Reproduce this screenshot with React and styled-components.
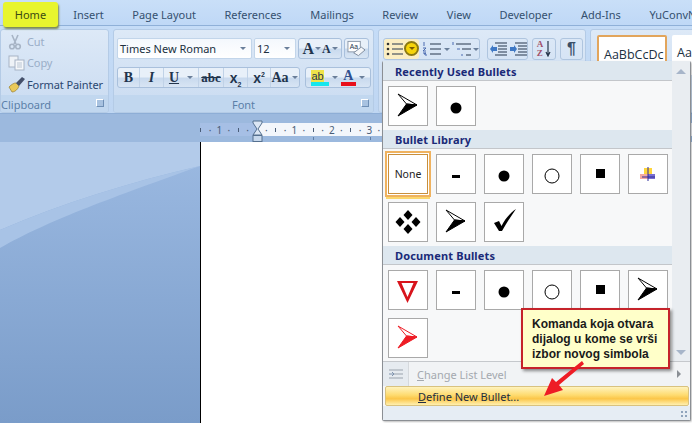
import React from "react";
import styled, { createGlobalStyle } from "styled-components";

const GlobalStyle = createGlobalStyle`
  html, body { margin: 0; padding: 0; background: #7f9fca; }
  * { box-sizing: border-box; }
`;

const Page = styled.div`
  position: relative;
  width: 692px;
  height: 423px;
  overflow: hidden;
  display: flex;
  flex-direction: column;
  font-family: "Noto Sans", "Liberation Sans", sans-serif;
  font-size: 11px;
  color: #2b4770;
`;

const TabBar = styled.div`
  height: 26px;
  flex: none;
  display: flex;
  align-items: center;
  padding: 3px 0 0 0.5px;
  background: linear-gradient(#c9dff8, #bfd8f6);
  border-bottom: 1px solid #8fb0d8;
  white-space: nowrap;
`;

const Tab = styled.div`
  position: relative;
  padding: 0 14.3px;
  color: #34506f;
  ${(p) =>
    p.$active &&
    `
    z-index: 3;
    margin-right: -1.5px;
    color: #3c4a12;
    &::before {
      content: "";
      position: absolute;
      z-index: -1;
      left: 2px;
      right: 2px;
      top: -5px;
      bottom: -5px;
      background: #e8f52e;
      border-radius: 3px;
      box-shadow: 1px 2px 2px #7d8a55;
    }
  `}
`;

const Ribbon = styled.div`
  height: 88px;
  flex: none;
  display: flex;
  gap: 4px;
  padding: 3px 0 0;
  background: linear-gradient(#c5dcf7, #bfd6f2);
  border-bottom: 1px solid #8eaed6;
`;

const Group = styled.div`
  width: ${(p) => p.$width}px;
  flex: none;
  display: flex;
  flex-direction: column;
  border: 1px solid #b4cbe6;
  border-radius: 3px;
  background: linear-gradient(#dde9f7, #c9dbf1);
  overflow: hidden;
`;

const GroupBody = styled.div`
  flex: 1;
  min-height: 0;
  display: flex;
  flex-direction: column;
  padding: ${(p) => p.$padding || "0"};
  gap: ${(p) => p.$gap || 0}px;
`;

const GroupLabel = styled.div`
  position: relative;
  height: 17px;
  flex: none;
  text-align: ${(p) => p.$align || "center"};
  line-height: 19px;
  color: #5b7fa8;
  background: #c1d7ef;
  font-size: 11px;
`;

const Launcher = styled.span`
  position: absolute;
  right: 4px;
  top: 4px;
  width: 8px;
  height: 8px;
  border: 1px solid #6f8fb5;
  border-top-color: #fff;
  border-left-color: #fff;
  background: #a8c2e0;
`;

const ClipRow = styled.div`
  height: 22px;
  display: flex;
  align-items: center;
  white-space: nowrap;
  padding-left: 7px;
  letter-spacing: -0.1px;
  color: ${(p) => (p.$disabled ? "#9aaec8" : "#2b4770")};
`;

const ClipIcon = styled.span`
  width: 19px;
  flex: none;
  display: flex;
  align-items: center;
`;

const Row = styled.div`
  display: flex;
  gap: ${(p) => p.$gap || 2}px;
  height: ${(p) => p.$height || 21}px;
  flex: none;
`;

const Field = styled.div`
  width: ${(p) => p.$width}px;
  display: flex;
  align-items: center;
  justify-content: space-between;
  padding: 0 5px 0 2px;
  background: linear-gradient(#f4f8fd, #fff);
  border: 1px solid #c2d5ea;
  border-radius: 2px;
  color: #20303f;
  font-size: 11px;
`;

const Caret = styled.span`
  width: 0;
  height: 0;
  border-left: 3px solid transparent;
  border-right: 3px solid transparent;
  border-top: 3px solid ${(p) => p.$color || "#6a7f9a"};
  flex: none;
`;

const ButtonGroup = styled.div`
  width: ${(p) => p.$width}px;
  flex: none;
  display: flex;
  align-items: center;
  justify-content: ${(p) => p.$justify || "space-around"};
  padding: 0 ${(p) => p.$pad ?? 2}px;
  border: 1px solid #a9c0dc;
  border-radius: 3px;
  background: linear-gradient(#e8f0f9 45%, #c9daee 55%, #d8e5f4);
  color: #22344c;
`;

const FmtCell = styled.span`
  width: ${(p) => p.$width}px;
  height: 100%;
  flex: none;
  display: flex;
  align-items: center;
  justify-content: center;
  gap: ${(p) => p.$gap || 0}px;
  border-right: 1px solid ${(p) => (p.$last ? "transparent" : "#c0d2e7")};
`;

const Fmt = styled.span`
  font-family: ${(p) => (p.$serif ? '"Liberation Serif", serif' : '"Liberation Sans", sans-serif')};
  font-weight: 700;
  font-style: ${(p) => (p.$italic ? "italic" : "normal")};
  font-size: ${(p) => p.$size || 14}px;
  text-decoration: ${(p) => p.$deco || "none"};
  color: ${(p) => p.$color || "#22344c"};
  line-height: 1;
`;

const Sub = styled.sub`
  font-size: 7px;
  line-height: 0;
`;

const Sup = styled.sup`
  font-size: 7px;
  line-height: 0;
`;

const ColorA = styled.span`
  display: flex;
  flex-direction: column;
  align-items: center;
  width: 15px;
  font: 700 14px/12px "Liberation Serif", serif;
  color: #2f4f8f;
  &::after {
    content: "";
    width: 15px;
    height: 4px;
    background: #e8101c;
  }
`;

const Highlight = styled.span`
  display: flex;
  flex-direction: column;
  align-items: center;
  width: 18px;
  font: 400 11px/12px "Liberation Sans", sans-serif;
  color: #2a3a50;
  &::after {
    content: "";
    width: 18px;
    height: 4px;
    background: #16e6ee;
  }
`;

const HighlightText = styled.span`
  background: #efe34a;
  align-self: flex-start;
`;

const ParagraphRow = styled.div`
  display: flex;
  height: 22px;
  flex: none;
`;

const ListCluster = styled.div`
  width: 97px;
  flex: none;
  display: flex;
  border: 1px solid #afc5df;
  border-radius: 3px;
  margin-right: 7px;
`;

const ParagraphButton = styled.div`
  position: relative;
  width: ${(p) => p.$width}px;
  height: ${(p) => (p.$inner ? "100%" : "22px")};
  flex: none;
  display: flex;
  align-items: center;
  justify-content: ${(p) => (p.$hot ? "flex-start" : "center")};
  gap: 2px;
  margin-right: ${(p) => (p.$inner ? 0 : 4)}px;
  border: ${(p) => (p.$inner ? "0" : "1px solid #afc5df")};
  border-radius: 3px;
  background: ${(p) => (p.$hot ? "#fbeec2" : "transparent")};
`;

const HotDot = styled.span`
  position: absolute;
  left: 20px;
  top: 2px;
  width: 15px;
  height: 15px;
  border-radius: 50%;
  background: #f6d40a;
  border: 2px solid #8c7a12;
  display: flex;
  align-items: center;
  justify-content: center;
`;

const Pilcrow = styled.span`
  font: 700 16px/1 "Liberation Sans", sans-serif;
  color: #3b4f68;
`;

const SortLetters = styled.span`
  display: flex;
  flex-direction: column;
  font: 700 9px/9px "Liberation Serif", serif;
  color: #a2506a;
`;

const StyleStrip = styled.div`
  display: flex;
  gap: 5px;
  padding: 5px 0 0 6px;
`;

const StyleTile = styled.div`
  width: ${(p) => (p.$wide ? 70 : 60)}px;
  height: 40px;
  flex: none;
  overflow: hidden;
  white-space: nowrap;
  background: #fff;
  padding: 10px 0 0 5px;
  border: ${(p) => (p.$selected ? "2px solid #e2a55c" : "0")};
  border-radius: 2px;
  font: 400 12.5px/16px "Open Sans", sans-serif;
  color: #20303f;
`;

const Workspace = styled.div`
  flex: 1;
  min-height: 0;
  display: flex;
  flex-direction: column;
`;

const RulerBand = styled.div`
  position: relative;
  height: 28px;
  flex: none;
  padding: 9px 0 6px 200px;
  background: #9cb9de;
`;

const Ruler = styled.div`
  height: 13px;
  display: flex;
  overflow: hidden;
  align-items: center;
  background: linear-gradient(90deg, #a6bfe5 57px, #f3f6fb 57px);
`;

const RulerCell = styled.span`
  width: 9.375px;
  flex: none;
  display: flex;
  align-items: center;
  justify-content: center;
  font: 400 10px/12px "Noto Sans", sans-serif;
  color: #4a5d78;
  &:first-child {
    margin-left: -4px;
  }
`;

const RulerTick = styled.span`
  width: 1px;
  height: 4px;
  background: #4a5d78;
`;

const BandTick = styled.span`
  position: absolute;
  left: ${(p) => p.$left}px;
  top: 23px;
  width: 1px;
  height: 3px;
  background: #5f7ea6;
`;

const Indent = styled.svg`
  position: absolute;
  left: 252px;
  top: 6px;
`;

const Desk = styled.div`
  flex: 1;
  min-height: 0;
  display: flex;
`;

const Margin = styled.div`
  position: relative;
  width: 200px;
  flex: none;
  background: linear-gradient(#9cbae2, #7a9cc9);
`;

const Swoosh = styled.svg`
  position: absolute;
  inset: 0;
`;

const Sheet = styled.div`
  flex: 1;
  background: #fff;
  border-left: 1px solid #000;
`;

const Menu = styled.div`
  position: absolute;
  left: 382px;
  top: 61px;
  width: 309px;
  height: 360px;
  z-index: 4;
  display: flex;
  flex-direction: column;
  background: #f7f8f9;
  border: 1px solid #8b8f94;
  border-top: 0;
  border-radius: 2px;
  box-shadow: 1px 1px 2px rgba(0, 0, 0, 0.25);
`;

const MenuTop = styled.div`
  height: 301px;
  flex: none;
  display: flex;
  border-bottom: 1px solid #c5c8cc;
`;

const Gallery = styled.div`
  width: 289px;
  flex: none;
`;

const Scrollbar = styled.div`
  flex: 1;
  display: flex;
  flex-direction: column;
  align-items: center;
  justify-content: space-between;
  padding: 8px 0 6px;
  background: #e9edf1;
`;

const ScrollArrow = styled.span`
  width: 0;
  height: 0;
  border-left: 5px solid transparent;
  border-right: 5px solid transparent;
  ${(p) => (p.$up ? "border-bottom" : "border-top")}: 5px solid #a7b5c9;
`;

const SectionHeader = styled.div`
  height: ${(p) => (p.$first ? 20 : 19)}px;
  display: flex;
  align-items: center;
  padding: ${(p) => (p.$first ? 2 : 0)}px 0 0 12px;
  background: #dde7ef;
  border-bottom: 1px solid #c3c6ca;
  font-weight: 700;
  font-size: 11px;
  letter-spacing: 0.15px;
  color: #1a2a78;
`;

const TileGrid = styled.div`
  display: grid;
  grid-template-columns: repeat(6, 40px);
  gap: 8px;
  padding: 5px 5px 4px;
`;

const Tile = styled.div`
  width: 40px;
  height: 40px;
  display: flex;
  align-items: center;
  justify-content: center;
  background: #fff;
  border: 1px solid #a9a9a9;
  color: #222;
  font-size: 10.5px;
  ${(p) =>
    p.$selected &&
    `
    border-color: #c98f3c;
    box-shadow: 0 0 0 1px #fff, 0 0 0 3px #efb25f, 0 3px 0 2px #fbd66c;
  `}
`;

const ListLevelRow = styled.div`
  height: 24px;
  flex: none;
  display: flex;
  align-items: center;
  background: #f1f3f5;
  color: #a4a9af;
`;

const IconColumn = styled.div`
  width: 26px;
  height: 100%;
  flex: none;
  display: flex;
  align-items: center;
  justify-content: center;
  background: #e6ebf0;
  border-right: 1px solid #d5d9dd;
`;

const RowLabel = styled.span`
  padding-left: 8px;
  flex: 1;
`;

const SideArrow = styled.span`
  width: 0;
  height: 0;
  margin-right: 9px;
  border-top: 4px solid transparent;
  border-bottom: 4px solid transparent;
  border-left: 4px solid #8a8f95;
`;

const DefineRow = styled.div`
  height: 20px;
  flex: none;
  margin: 0 1px 0 2px;
  display: flex;
  align-items: center;
  padding-left: 32px;
  background: linear-gradient(#fff3bd, #fedb6f 45%, #fbc649 65%, #fff0b0);
  border: 1px solid #d9c27e;
  border-radius: 2px;
  color: #222d40;
`;

const Footer = styled.div`
  flex: 1;
  position: relative;
  background: #e6edf4;
`;

const Grip = styled.span`
  position: absolute;
  right: 2px;
  bottom: 2px;
  width: 8px;
  height: 8px;
  background-image: radial-gradient(circle, #8fa4bd 1px, transparent 1.2px);
  background-size: 4px 4px;
`;

const Callout = styled.div`
  position: absolute;
  left: 521px;
  top: 308px;
  width: 149px;
  height: 61px;
  z-index: 5;
  padding: 7px 0 0 9px;
  background: #ffffc9;
  border: 2px solid #c5232a;
  box-shadow: 2px 2px 3px rgba(0, 0, 0, 0.45);
  font: 700 12px/15px "Liberation Sans", sans-serif;
  color: #1a1a1a;
  white-space: nowrap;
`;

const Pointer = styled.svg`
  position: absolute;
  left: 535px;
  top: 358px;
  z-index: 6;
`;

const Underline = styled.span`
  text-decoration: underline;
`;

const ArrowBullet = ({ color = "#000" }) => (
  <svg width="38" height="38" viewBox="0 0 38 38">
    <path d="M9 7 L28 18 L17.5 17 Z" fill="#fff" stroke={color} strokeWidth="1" />
    <path d="M28 18 L17.5 17 L9 29 Z" fill={color} stroke={color} strokeWidth="1" />
  </svg>
);

const Dash = () => (
  <svg width="38" height="38" viewBox="0 0 38 38">
    <rect x="15" y="20" width="8" height="3" fill="#000" />
  </svg>
);

const Dot = () => (
  <svg width="38" height="38" viewBox="0 0 38 38">
    <circle cx="19" cy="21" r="5.5" fill="#000" />
  </svg>
);

const Ring = () => (
  <svg width="38" height="38" viewBox="0 0 38 38">
    <circle cx="19" cy="21" r="7" fill="#fff" stroke="#000" strokeWidth="1" />
  </svg>
);

const SquareBullet = () => (
  <svg width="38" height="38" viewBox="0 0 38 38">
    <rect x="15" y="14" width="9" height="9" fill="#000" />
  </svg>
);

const PictureBullet = () => (
  <svg width="38" height="38" viewBox="0 0 38 38">
    <rect x="15" y="13" width="8" height="7" fill="#ffd53a" />
    <rect x="11" y="19" width="9" height="5" fill="#f3a8a0" />
    <rect x="19" y="19" width="7" height="5" fill="#7a6fd0" />
    <path d="M19 12 V26 M13 22 H26" stroke="#2a2a9a" strokeWidth="1" fill="none" />
  </svg>
);

const Diamonds = () => (
  <svg width="38" height="38" viewBox="0 0 38 38" fill="#000">
    <path d="M19 7 L23.5 12 L19 17 L14.5 12 Z" />
    <path d="M19 21 L23.5 26 L19 31 L14.5 26 Z" />
    <path d="M11 14 L15.5 19 L11 24 L6.5 19 Z" />
    <path d="M27 14 L31.5 19 L27 24 L22.5 19 Z" />
  </svg>
);

const Check = () => (
  <svg width="38" height="38" viewBox="0 0 38 38">
    <path d="M9 20 L14 18 L16.5 23 C20 16 25 10 31 6 C26 13 21 21 17 28 L14 28 Z" fill="#000" />
  </svg>
);

const Triangle = () => (
  <svg width="38" height="38" viewBox="0 0 38 38">
    <path d="M8 10 H29 L18.5 32 Z M12.5 12 L18.5 26 L24.5 12 Z" fill="#d8141c" fillRule="evenodd" />
  </svg>
);

const ListIcon = ({ numbered }) => (
  <svg width="20" height="16" viewBox="0 0 20 16">
    {numbered ? (
      <path d="M2 1 V5 M1 7 H4 L1 10 H4 M1 12 H4 L2 13 H4 V15" stroke="#4a6bb0" fill="none" strokeWidth="1" />
    ) : (
      <g fill="#333">
        <circle cx="4" cy="3" r="1.3" />
        <circle cx="4" cy="8" r="1.3" />
        <circle cx="4" cy="13" r="1.3" />
      </g>
    )}
    <path d="M8 3 H19 M8 8 H19 M8 13 H19" stroke="#26364c" strokeWidth="1" />
  </svg>
);

const MultilevelIcon = () => (
  <svg width="19" height="16" viewBox="0 0 19 16">
    <path d="M1 1 V4 M5 8 H8 M10 13 V15" stroke="#4a6bb0" strokeWidth="1" fill="none" />
    <path d="M4 3 H19 M10 8 H19 M14 14 H19" stroke="#26364c" strokeWidth="1" />
  </svg>
);

const IndentIcon = ({ flip }) => (
  <svg width="18" height="16" viewBox="0 0 18 16">
    <path d="M6 2 H18 M9 5 H18 M9 8 H18 M9 11 H18 M6 14 H18" stroke="#26364c" strokeWidth="1.1" />
    <path d={flip ? "M1 6 H5 V4 L8 8 L5 12 V10 H1 Z" : "M8 6 H4 V4 L1 8 L4 12 V10 H8 Z"} fill="#3f78c4" />
  </svg>
);

const Scissors = () => (
  <svg width="14" height="16" viewBox="0 0 14 16" fill="none" stroke="#a7b4c5" strokeWidth="1.6">
    <path d="M4 1 L8 10 M10 1 L6 10" />
    <circle cx="4" cy="12.5" r="2.3" />
    <circle cx="10" cy="12.5" r="2.3" />
  </svg>
);

const CopyIcon = () => (
  <svg width="18" height="16" viewBox="0 0 18 16">
    <rect x="1" y="1" width="9" height="11" fill="#eef2f7" stroke="#a7b4c5" />
    <rect x="7" y="5" width="9" height="10" fill="#f5f7fa" stroke="#a7b4c5" />
    <path d="M9 8 H14 M9 10 H14 M9 12 H14" stroke="#b9c5d3" />
  </svg>
);

const BrushIcon = () => (
  <svg width="18" height="17" viewBox="0 0 18 17">
    <path d="M1 11 C4 8 6 7 8 7 L11 10 C10 13 7 16 4 16 Z" fill="#e9c95a" stroke="#9b7f2e" strokeWidth="0.7" />
    <path d="M8 7 L14 1 L17 3 L11 10 Z" fill="#44506a" />
  </svg>
);

const Eraser = () => (
  <svg width="20" height="18" viewBox="0 0 20 18">
    <rect x="1" y="1" width="13" height="11" fill="#fff" stroke="#8a97a8" />
    <text x="3" y="9" fontSize="7" fontFamily="Liberation Sans" fill="#22344c">Aa</text>
    <path d="M7 13 L15 7 L19 10 L12 16 Z" fill="#f4f6f9" stroke="#7c8a9c" />
  </svg>
);

const rulerMark = (k) => {
  if (k === 0) return "";
  if (k % 4 === 0) return Math.abs(k) / 4;
  return k % 2 === 0 ? <RulerTick /> : "·";
};

// only the part of the ruler that the open menu leaves visible
const rulerCells = Array.from({ length: 20 }, (_, i) => i - 6);

const recent = [<ArrowBullet key="a" />, <Dot key="b" />];

const library = [
  "None",
  <Dash key="a" />,
  <Dot key="b" />,
  <Ring key="c" />,
  <SquareBullet key="d" />,
  <PictureBullet key="e" />,
  <Diamonds key="f" />,
  <ArrowBullet key="g" />,
  <Check key="h" />,
];

const documentBullets = [
  <Triangle key="a" />,
  <Dash key="b" />,
  <Dot key="c" />,
  <Ring key="d" />,
  <SquareBullet key="e" />,
  <ArrowBullet key="f" />,
  <ArrowBullet key="g" color="#ee1c25" />,
];

const tabs = ["Insert", "Page Layout", "References", "Mailings", "Review", "View", "Developer", "Add-Ins", "YuConvNet"];

export default function App() {
  return (
    <Page>
      <GlobalStyle />
      <TabBar>
        <Tab $active>Home</Tab>
        {tabs.map((t) => (
          <Tab key={t}>{t}</Tab>
        ))}
      </TabBar>

      <Ribbon>
        <Group $width={109}>
          <GroupBody $padding="1px 0 0">
            <ClipRow $disabled>
              <ClipIcon><Scissors /></ClipIcon>
              Cut
            </ClipRow>
            <ClipRow $disabled>
              <ClipIcon><CopyIcon /></ClipIcon>
              Copy
            </ClipRow>
            <ClipRow>
              <ClipIcon><BrushIcon /></ClipIcon>
              Format Painter
            </ClipRow>
          </GroupBody>
          <GroupLabel $align="left">
            Clipboard
            <Launcher />
          </GroupLabel>
        </Group>

        <Group $width={261}>
          <GroupBody $padding="8px 0 0 3px" $gap={8}>
            <Row>
              <Field $width={135}>
                Times New Roman
                <Caret />
              </Field>
              <Field $width={42}>
                12
                <Caret />
              </Field>
              <ButtonGroup $width={44} $pad={3}>
                <Fmt $serif $size={16}>A</Fmt>
                <Caret />
                <Fmt $serif $size={12}>A</Fmt>
                <Caret />
              </ButtonGroup>
              <ButtonGroup $width={25}>
                <Eraser />
              </ButtonGroup>
            </Row>
            <Row $gap={5}>
              <ButtonGroup $width={183} $pad={0} $justify="flex-start">
                <FmtCell $width={22}><Fmt $serif>B</Fmt></FmtCell>
                <FmtCell $width={24}><Fmt $serif $italic>I</Fmt></FmtCell>
                <FmtCell $width={35} $gap={8}>
                  <Fmt $serif $deco="underline">U</Fmt>
                  <Caret />
                </FmtCell>
                <FmtCell $width={25}><Fmt $serif $size={13} $deco="line-through">abc</Fmt></FmtCell>
                <FmtCell $width={24}>
                  <Fmt>
                    x<Sub>2</Sub>
                  </Fmt>
                </FmtCell>
                <FmtCell $width={23}>
                  <Fmt>
                    x<Sup>2</Sup>
                  </Fmt>
                </FmtCell>
                <FmtCell $width={28} $gap={3} $last>
                  <Fmt $serif>Aa</Fmt>
                  <Caret />
                </FmtCell>
              </ButtonGroup>
              <ButtonGroup $width={66} $pad={4}>
                <Highlight>
                  <HighlightText>ab</HighlightText>
                </Highlight>
                <Caret />
                <ColorA>A</ColorA>
                <Caret />
              </ButtonGroup>
            </Row>
          </GroupBody>
          <GroupLabel>
            Font
            <Launcher />
          </GroupLabel>
        </Group>

        <Group $width={208}>
          <GroupBody $padding="8px 0 0 4px">
            <ParagraphRow>
              <ListCluster>
                <ParagraphButton $width={35} $inner $hot>
                  <ListIcon />
                  <HotDot>
                    <Caret $color="#7a5c00" />
                  </HotDot>
                </ParagraphButton>
                <ParagraphButton $width={33} $inner>
                  <ListIcon numbered />
                  <Caret />
                </ParagraphButton>
                <ParagraphButton $width={27} $inner>
                  <MultilevelIcon />
                  <Caret />
                </ParagraphButton>
              </ListCluster>
              <ParagraphButton $width={41}>
                <IndentIcon />
                <IndentIcon flip />
              </ParagraphButton>
              <ParagraphButton $width={24}>
                <SortLetters>
                  <span>A</span>
                  <span>Z</span>
                </SortLetters>
                <svg width="6" height="16" viewBox="0 0 6 16">
                  <path d="M3 0 V14 M1 11 L3 15 L5 11" stroke="#26364c" fill="none" strokeWidth="1.2" />
                </svg>
              </ParagraphButton>
              <ParagraphButton $width={23}>
                <Pilcrow>¶</Pilcrow>
              </ParagraphButton>
            </ParagraphRow>
          </GroupBody>
        </Group>

        <Group $width={110}>
          <StyleStrip>
            <StyleTile $wide $selected>AaBbCcDc</StyleTile>
            <StyleTile>AaI</StyleTile>
          </StyleStrip>
        </Group>
      </Ribbon>

      <Workspace>
        <RulerBand>
          <Ruler>
            {rulerCells.map((k) => (
              <RulerCell key={k}>{rulerMark(k)}</RulerCell>
            ))}
          </Ruler>
          <BandTick $left={313} />
          <BandTick $left={370} />
          <Indent width="11" height="22" viewBox="0 0 11 22">
            <path d="M1 1 H10 V3 L6 9 L10 15 H1 L5 9 L1 3 Z" fill="#dbe6f4" stroke="#55708f" />
            <rect x="1" y="15.5" width="9" height="6" fill="#c7d8ec" stroke="#55708f" />
          </Indent>
        </RulerBand>
        <Desk>
          <Margin>
            <Swoosh width="200" height="281" viewBox="0 0 200 281">
              <path d="M0 88 C60 62 130 40 200 24 V0 H0 Z" fill="#b3cbea" />
              <path d="M0 106 C50 78 100 60 200 24 C130 40 60 62 0 88 Z" fill="#a8c3e6" />
            </Swoosh>
          </Margin>
          <Sheet />
        </Desk>
      </Workspace>

      <Menu>
        <MenuTop>
          <Gallery>
            <SectionHeader $first>Recently Used Bullets</SectionHeader>
            <TileGrid>
              {recent.map((b, i) => (
                <Tile key={i}>{b}</Tile>
              ))}
            </TileGrid>
            <SectionHeader>Bullet Library</SectionHeader>
            <TileGrid>
              {library.map((b, i) => (
                <Tile key={i} $selected={i === 0}>
                  {b}
                </Tile>
              ))}
            </TileGrid>
            <SectionHeader>Document Bullets</SectionHeader>
            <TileGrid>
              {documentBullets.map((b, i) => (
                <Tile key={i}>{b}</Tile>
              ))}
            </TileGrid>
          </Gallery>
          <Scrollbar>
            <ScrollArrow $up />
            <ScrollArrow />
          </Scrollbar>
        </MenuTop>
        <ListLevelRow>
          <IconColumn>
            <svg width="16" height="12" viewBox="0 0 16 12">
              <path d="M1 2 H15 M1 10 H15 M6 6 H15" stroke="#9aa3ad" />
              <path d="M1 6 H6 M4 4 L6 6 L4 8" stroke="#7f93ad" fill="none" />
            </svg>
          </IconColumn>
          <RowLabel>
            <Underline>C</Underline>hange List Level
          </RowLabel>
          <SideArrow />
        </ListLevelRow>
        <DefineRow>
          <Underline>D</Underline>efine New Bullet...
        </DefineRow>
        <Footer>
          <Grip />
        </Footer>
      </Menu>

      <Callout>
        Komanda koja otvara
        <br />
        dijalog u kome se vrši
        <br />
        izbor novog simbola
      </Callout>
      <Pointer width="56" height="44" viewBox="0 0 56 44">
        <path d="M47 3 L49 6 L24 27 L28 32 L9 38 L17 20 L21 24 Z" fill="#ee1c25" />
      </Pointer>
    </Page>
  );
}
